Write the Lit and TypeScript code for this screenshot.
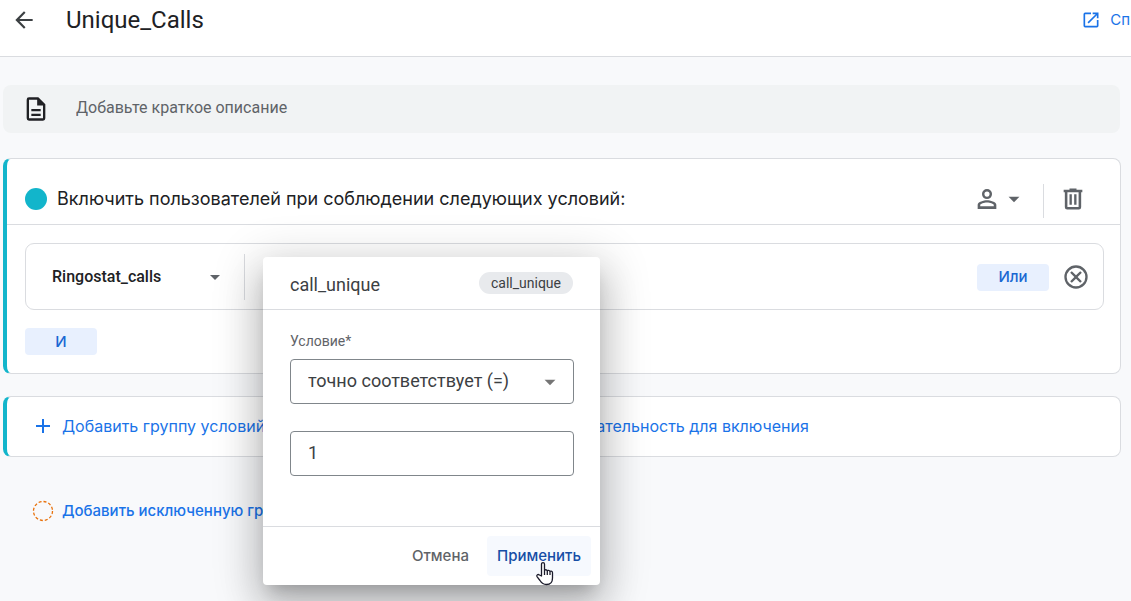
import { LitElement, html, css, svg } from "lit";
import { customElement, state } from "lit/decorators.js";

const icon = (d: string, size = 24) => html`
  <svg class="icon" width=${size} height=${size} viewBox="0 0 24 24" aria-hidden="true">
    ${svg`<path fill="currentColor" fill-rule="evenodd" d=${d}></path>`}
  </svg>
`;

const BACK = "M20 11H7.8l5.6-5.6L12 4l-8 8 8 8 1.4-1.4L7.8 13H20z";
const OPEN = "M19 19H5V5h7V3H5a2 2 0 0 0-2 2v14a2 2 0 0 0 2 2h14a2 2 0 0 0 2-2v-7h-2zM14 3v2h3.6l-9.8 9.8 1.4 1.4L19 6.4V10h2V3z";
const NOTE = "M14 2H6a2 2 0 0 0-2 2v16a2 2 0 0 0 2 2h12a2 2 0 0 0 2-2V8zM6 4h7v5h5v11H6zM8 12v2h8v-2zM8 16v2h8v-2z";
const PERSON = "M12 3.500a4.300 4.300 0 1 0 0 8.600 4.300 4.300 0 0 0 0-8.600zM12 5.600a2.200 2.200 0 1 1 0 4.400 2.200 2.200 0 0 1 0-4.400zM12 13c-2.700 0-8 1.300-8 4v3.500h16V17c0-2.700-5.300-4-8-4zM6.200 18.300V17c.2-.7 3.200-1.900 5.800-1.900s5.600 1.200 5.800 1.900v1.300z";
const TRASH = "M15 4V3H9v1H4v2.200h1V19a2 2 0 0 0 2 2h10a2 2 0 0 0 2-2V6.200h1V4zM7.200 6.200h9.600v12.600H7.200zM9 8v9h2V8zM13 8v9h2V8z";
const REMOVE = "M12 2a10 10 0 1 0 0 20 10 10 0 0 0 0-20zM12 4a8 8 0 1 1 0 16 8 8 0 0 1 0-16zM15.600 7L12 10.600 8.400 7 7 8.400 10.600 12 7 15.600 8.400 17 12 13.400 15.600 17 17 15.600 13.400 12 17 8.400z";
const PLUS = "M11 5h2v6h6v2h-6v6h-2v-6H5v-2h6z";
const CARET = "M7 10l5 5 5-5z";

@customElement("condition-dialog")
export class ConditionDialog extends LitElement {
  static styles = css`
    :host {
      display: block;
      background: #fff;
      border-radius: 4px;
      color: #3c4043;
      font-family: Roboto, sans-serif;
      box-shadow: 0 11px 15px -7px rgba(0, 0, 0, 0.2), 0 24px 38px 3px rgba(0, 0, 0, 0.14),
        0 9px 46px 8px rgba(0, 0, 0, 0.16);
    }
    * {
      box-sizing: border-box;
    }
    .head {
      display: flex;
      align-items: center;
      justify-content: space-between;
      height: 53px;
      padding: 0 27px;
      border-bottom: 1px solid #dadce0;
    }
    .title {
      margin: 0;
      padding-top: 3px;
      font-size: 18px;
      font-weight: 400;
      line-height: 24px;
    }
    .chip {
      padding: 0 12px;
      border-radius: 11px;
      background: #e8eaed;
      font-size: 14px;
      line-height: 22px;
    }
    .body {
      display: grid;
      padding: 21px 26px 50px 27px;
    }
    .label {
      color: #5f6368;
      font-size: 14px;
      line-height: 20px;
      margin-bottom: 8px;
    }
    .field {
      display: grid;
      align-items: center;
      margin-bottom: 27px;
    }
    .field > * {
      grid-area: 1 / 1;
    }
    .field .icon {
      justify-self: end;
      margin-right: 11px;
      color: #757575;
      pointer-events: none;
    }
    .control {
      appearance: none;
      width: 100%;
      height: 45px;
      margin: 0;
      padding: 0 17px 2px;
      border: 1px solid #80868b;
      border-radius: 4px;
      background: #fff;
      color: #3c4043;
      font: 18px/24px Roboto, sans-serif;
    }
    .value {
      margin-bottom: 0;
    }
    .foot {
      display: flex;
      justify-content: flex-end;
      gap: 8px;
      padding: 9px;
      border-top: 1px solid #dadce0;
    }
    .button {
      height: 40px;
      padding: 0 10px;
      border: 0;
      border-radius: 4px;
      background: none;
      color: #5f6368;
      font: 500 15px/20px Inter, sans-serif;
    }
    .apply {
      background: #f6f9fe;
      color: #174ea6;
    }
    .icon {
      display: block;
    }
  `;

  @state() private value = "1";

  render() {
    return html`
      <div class="head">
        <h2 class="title">call_unique</h2>
        <span class="chip">call_unique</span>
      </div>
      <div class="body">
        <label class="label" for="operator">Условие*</label>
        <div class="field">
          <select class="control" id="operator">
            <option>точно соответствует (=)</option>
          </select>
          ${icon(CARET, 26)}
        </div>
        <div class="field value">
          <input
            class="control"
            aria-label="Значение"
            .value=${this.value}
            @input=${(e: Event) => (this.value = (e.target as HTMLInputElement).value)}
          />
        </div>
      </div>
      <div class="foot">
        <button class="button">Отмена</button>
        <button class="button apply">Применить</button>
      </div>
    `;
  }
}

@customElement("app-root")
export class AppRoot extends LitElement {
  static styles = css`
    :host {
      display: block;
      position: relative;
      min-height: 100vh;
      overflow: hidden;
      background: #f8f9fb;
      color: #202124;
      font-family: Inter, sans-serif;
    }
    * {
      box-sizing: border-box;
    }
    .icon {
      display: block;
      flex: none;
    }
    button {
      display: flex;
      align-items: center;
      padding: 0;
      border: 0;
      background: none;
      color: #5f6368;
      font-family: inherit;
    }
    .topbar {
      display: flex;
      align-items: center;
      height: 57px;
      padding: 0 1px 16px 11px;
      border-bottom: 1px solid #dadce0;
      background: #fff;
    }
    .back {
      color: #3c4043;
    }
    .name {
      flex: 1;
      margin: 0 0 0 29px;
      font: 400 24px/32px Roboto, sans-serif;
    }
    .help {
      display: flex;
      align-items: center;
      gap: 9px;
      color: #1a73e8;
      font-size: 15px;
      line-height: 24px;
      text-decoration: none;
      white-space: nowrap;
    }
    .page {
      padding: 28px 10px 0 3px;
    }
    .summary {
      display: flex;
      align-items: center;
      gap: 26px;
      height: 48px;
      margin: 0 1px 25px 0;
      padding: 0 19px;
      border-radius: 8px;
      background: #f1f3f4;
    }
    .description {
      flex: 1;
      height: 24px;
      padding: 0 0 4px;
      border: 0;
      background: none;
      color: #5f6368;
      font: 16px/20px Roboto, sans-serif;
    }
    .description::placeholder {
      color: #5f6368;
    }
    .card {
      margin-bottom: 22px;
      border: 1px solid #dadce0;
      border-left: 4px solid #12b5cb;
      border-radius: 8px;
      background: #fff;
    }
    .card-head {
      display: flex;
      align-items: center;
      height: 66px;
      padding: 14px 33px 0 18px;
      border-bottom: 1px solid #dadce0;
    }
    .dot {
      width: 22px;
      height: 22px;
      margin-right: 10px;
      border-radius: 50%;
      background: #12b5cb;
    }
    .card-title {
      flex: 1;
      margin: 0;
      font-size: 18px;
      font-weight: 400;
      line-height: 24px;
    }
    .scope {
      gap: 0;
      padding-right: 16px;
    }
    .trash {
      height: 34px;
      margin-top: 4px;
      padding: 0 0 4px 15px;
      border-left: 1px solid #dadce0;
    }
    .card-body {
      display: grid;
      justify-items: start;
      gap: 18px;
      padding: 18px 16px 18px 18px;
    }
    .condition {
      display: flex;
      align-items: center;
      width: 100%;
      height: 67px;
      padding: 1px 13px 0 26px;
      border: 1px solid #dadce0;
      border-radius: 9px;
    }
    .event {
      justify-content: space-between;
      width: 193px;
      height: 46px;
      padding-right: 17px;
      border-right: 1px solid #dadce0;
      color: #202124;
      font: 500 16px/24px Roboto, sans-serif;
    }
    .event .icon {
      color: #5f6368;
    }
    .tonal {
      justify-content: center;
      width: 72px;
      height: 27px;
      border-radius: 4px;
      background: #e8f0fe;
      color: #1967d2;
      font-size: 15px;
      font-weight: 500;
      line-height: 20px;
    }
    .or {
      margin: 0 13px 0 auto;
    }
    .links {
      display: flex;
      align-items: center;
      gap: 175px;
      height: 61px;
      padding: 0 0 1px 24px;
    }
    .link {
      gap: 7px;
      color: #1a73e8;
      font-size: 16px;
      font-weight: 400;
      line-height: 24px;
      white-space: nowrap;
    }
    .exclude {
      margin: 42px 0 0 29px;
      gap: 8px;
      font-size: 15px;
      font-weight: 500;
    }
    .dialog {
      position: absolute;
      top: 257px;
      left: 263px;
      width: 337px;
    }
    .pointer {
      position: absolute;
      top: 561px;
      left: 535px;
    }
  `;

  render() {
    return html`
      <header class="topbar">
        <button class="back" aria-label="Назад">${icon(BACK, 26)}</button>
        <h1 class="name">Unique_Calls</h1>
        <a class="help" href="#">${icon(OPEN, 20)}Сп</a>
      </header>
      <main class="page">
        <div class="summary">
          ${icon(NOTE, 28)}
          <input class="description" aria-label="Описание" placeholder="Добавьте краткое описание" />
        </div>
        <section class="card">
          <div class="card-head">
            <span class="dot"></span>
            <h2 class="card-title">Включить пользователей при соблюдении следующих условий:</h2>
            <button class="scope" aria-label="Область">${icon(PERSON, 28)}${icon(CARET, 26)}</button>
            <button class="trash" aria-label="Удалить">${icon(TRASH, 28)}</button>
          </div>
          <div class="card-body">
            <div class="condition">
              <button class="event">Ringostat_calls${icon(CARET)}</button>
              <button class="tonal or">Или</button>
              <button aria-label="Убрать">${icon(REMOVE, 28)}</button>
            </div>
            <button class="tonal">И</button>
          </div>
        </section>
        <section class="card links">
          <button class="link">${icon(PLUS)}Добавить группу условий</button>
          <button class="link">Добавить последовательность для включения</button>
        </section>
        <button class="link exclude">
          <svg class="icon" width="22" height="22" viewBox="0 0 22 22" aria-hidden="true">
            <circle cx="11" cy="11" r="9.500" fill="none" stroke="#e8710a" stroke-width="1.300" stroke-dasharray="3 2"></circle>
          </svg>
          Добавить исключенную группу
        </button>
      </main>
      <condition-dialog class="dialog" role="dialog"></condition-dialog>
      <svg class="pointer" width="20" height="25" viewBox="0 0 20 25" aria-hidden="true">
        <path
          d="M6.500 15V3.200c0-2.200 3-2.200 3 0V10c0-1.800 2.800-1.600 2.800.3 0-1.500 2.700-1.300 2.700.6 0-1.300 2.500-1.100 2.500.8V17c0 4-2 6.500-6 6.500-3.500 0-5-1.500-6.500-4L2 15.600c-.8-1.600 1-2.800 2.400-1.600zM9.500 10v4M12.300 10.300V14M15 11v3"
          fill="#fff"
          stroke="#1b1b2b"
          stroke-width="1.300"
          stroke-linejoin="round"
        ></path>
      </svg>
    `;
  }
}
